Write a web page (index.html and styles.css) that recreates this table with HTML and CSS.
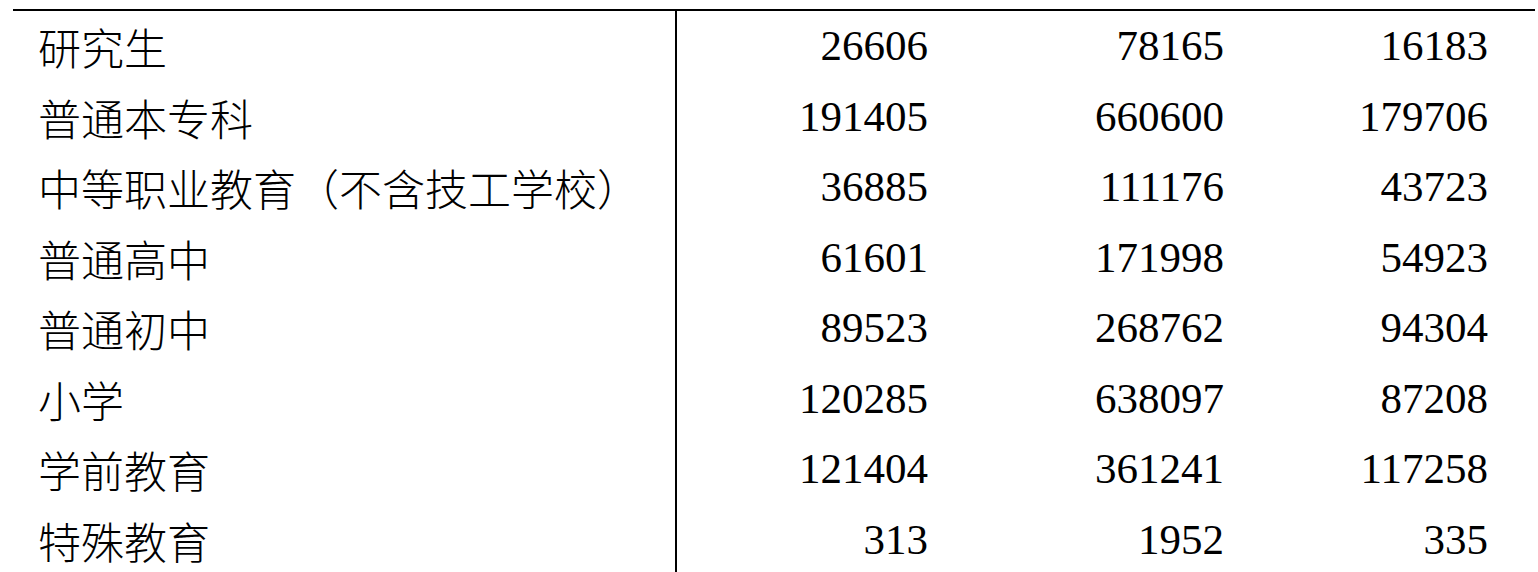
FILE: index.html
```html
<!DOCTYPE html>
<html>
<head>
<meta charset="utf-8">
<link rel="stylesheet" href="styles.css">
</head>
<body>
<div class="table">
  <div class="row"><div class="label">研究生</div><div class="num">26606</div><div class="num">78165</div><div class="num">16183</div></div>
  <div class="row"><div class="label">普通本专科</div><div class="num">191405</div><div class="num">660600</div><div class="num">179706</div></div>
  <div class="row"><div class="label">中等职业教育（不含技工学校）</div><div class="num">36885</div><div class="num">111176</div><div class="num">43723</div></div>
  <div class="row"><div class="label">普通高中</div><div class="num">61601</div><div class="num">171998</div><div class="num">54923</div></div>
  <div class="row"><div class="label">普通初中</div><div class="num">89523</div><div class="num">268762</div><div class="num">94304</div></div>
  <div class="row"><div class="label">小学</div><div class="num">120285</div><div class="num">638097</div><div class="num">87208</div></div>
  <div class="row"><div class="label">学前教育</div><div class="num">121404</div><div class="num">361241</div><div class="num">117258</div></div>
  <div class="row"><div class="label">特殊教育</div><div class="num">313</div><div class="num">1952</div><div class="num">335</div></div>
</div>
</body>
</html>
```
FILE: styles.css
```css
html, body {
  margin: 0;
  padding: 0;
  background: #ffffff;
}
body {
  overflow: hidden;
  font-family: "Liberation Serif", serif;
}
.table {
  margin: 9px 0 0 13px;
  width: 1522px;
  border-top: 2px solid #000;
  font-size: 43px;
  color: #000;
}
.row {
  display: grid;
  grid-template-columns: 664px 251px 296px 264px;
  height: 70.5px;
  line-height: 70.5px;
}
.label {
  padding-left: 25px;
  border-right: 2px solid #000;
  white-space: nowrap;
  font-family: "Noto Sans CJK SC", sans-serif;
  font-weight: 300;
}
.num {
  text-align: right;
  white-space: nowrap;
  font-family: "Liberation Serif", serif;
}
```
